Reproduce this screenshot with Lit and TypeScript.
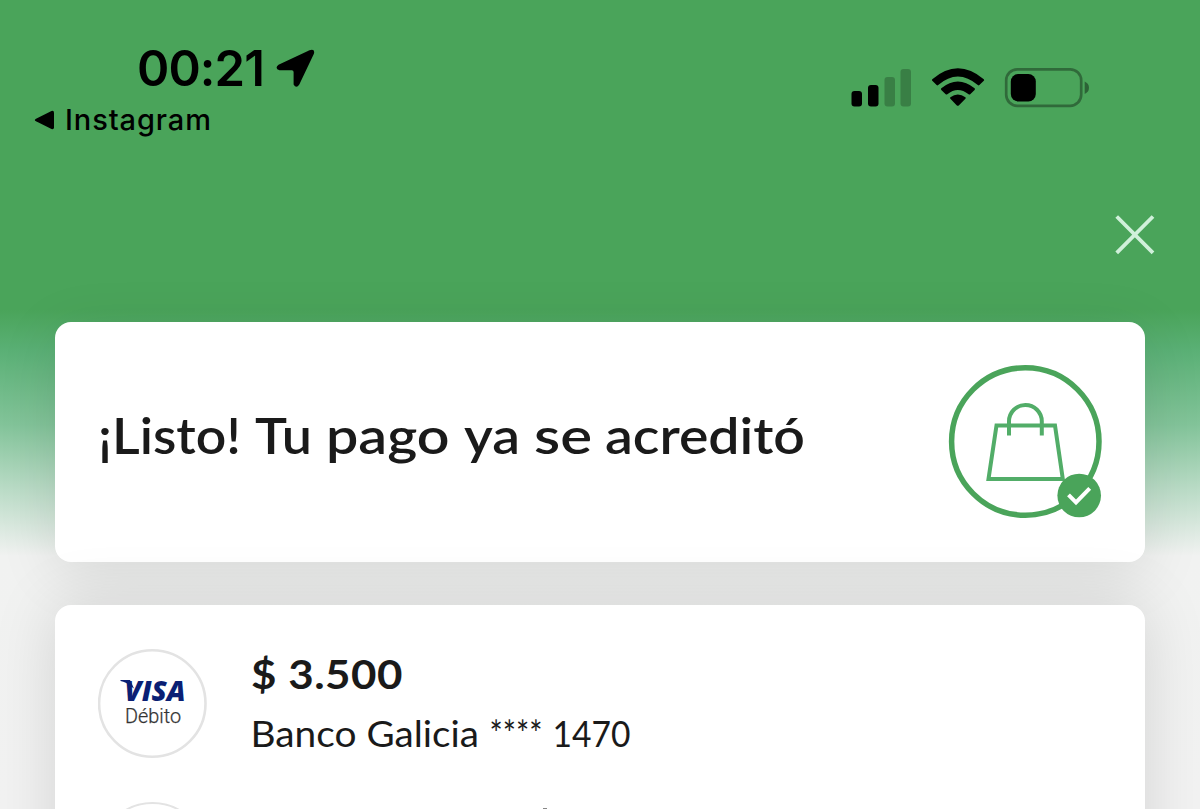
import { LitElement, html, svg, css } from "lit";
import { customElement } from "lit/decorators.js";

@customElement("status-bar")
class StatusBar extends LitElement {
  static styles = css`
    :host { display: flex; justify-content: space-between; height: 180px; box-sizing: border-box; padding: 39px 110px 0 34px; color: #000; font-family: Inter, sans-serif; }
    .left { display: flex; flex-direction: column; }
    .clock { display: flex; align-items: center; height: 60px; padding-left: 103px; }
    .time { font-size: 49px; font-weight: 600; line-height: 60px; letter-spacing: -0.9px; white-space: nowrap; }
    .arrow { margin-left: 12px; display: block; }
    .back { display: flex; align-items: center; height: 40px; margin-top: 1px; font-size: 29px; font-weight: 500; letter-spacing: 0.9px; line-height: 40px; }
    .back svg { margin-right: 10px; display: block; }
    .right { display: flex; padding-top: 27px; }
    .right svg { display: block; }
  `;
  render() {
    return html`
      <div class="left">
        <div class="clock">
          <span class="time">00:21</span>
          <svg class="arrow" width="40" height="40" viewBox="0 0 40 40"><path d="M2.500 15.800 33.500 1.300Q39.500 -.5 37.800 5L23.300 35.500Q20.300 40 17.600 35.500V23Q17.600 21.300 15.800 21.300H3.500Q-1.800 19.400 2.500 15.800Z"/></svg>
        </div>
        <div class="back">
          <svg width="21" height="20" viewBox="0 0 21 20"><path d="M2 8.700 17.500.9Q20 .2 20 2.700V17.300Q20 19.800 17.500 19.100L2 11.300Q-.4 10 2 8.700Z"/></svg>
          <span>Instagram</span>
        </div>
      </div>
      <div class="right">
        <svg width="240" height="44" viewBox="850 66 240 44">
          <rect x="851.500" y="91" width="10.500" height="15.500" rx="3"/>
          <rect x="868" y="85" width="10.500" height="21.500" rx="3"/>
          <g opacity=".22"><rect x="884.500" y="77" width="10.500" height="29.500" rx="3"/><rect x="900.500" y="69" width="10.500" height="37.500" rx="3"/></g>
          <path d="M932.300 79.200Q957.800 57.300 983.800 79.200Q984.500 80 983.800 80.800L979.400 85.100Q978.600 85.800 977.800 85.100Q957.800 68.100 938.200 85.100Q937.400 85.800 936.600 85.100L932.300 80.800Q931.500 80 932.300 79.200Z"/>
          <path d="M941.300 88.300Q957.800 74.800 974.600 88.300Q975.400 89.100 974.600 89.900L970.200 94.200Q969.400 94.800 968.600 94.200Q957.800 85.600 947.300 94.200Q946.500 94.800 945.700 94.200L941.300 89.900Q940.500 89.100 941.300 88.300Z"/>
          <path d="M950.400 97.200Q957.800 91.600 965.400 97.200Q966.200 98 965.400 98.800L959 105.200Q957.800 106.300 956.600 105.200L950.400 98.800Q949.600 98 950.400 97.200Z"/>
          <rect x="1006.200" y="69.300" width="75" height="36.500" rx="11" fill="none" stroke="#000" stroke-opacity=".35" stroke-width="2.700"/>
          <rect x="1010.800" y="74" width="25" height="27.500" rx="7.500"/>
          <path d="M1084.700 81.500Q1089 83.500 1089 87.800T1084.700 94Z" opacity=".4"/>
        </svg>
      </div>`;
  }
}

@customElement("card-badge")
class CardBadge extends LitElement {
  static styles = css`
    :host { display: block; flex: none; width: 109px; height: 109px; }
    svg { display: block; }
    .visa { font: italic 800 29px "Open Sans", sans-serif; fill: #0a1f74; }
    .kind { font: 300 19.500px Roboto, sans-serif; fill: #333; stroke: #333; stroke-width: .25px; }
  `;
  render() {
    return html`<svg width="109" height="109" viewBox="0 0 109 109">
      <circle cx="54.300" cy="54.500" r="53.200" fill="#fff" stroke="#e3e3e3" stroke-width="2.600"/>
      <path d="M22.500 31H32L36 39.500 31.500 36.500Q28.500 33 22.500 32Z" fill="#0a1f74"/>
      <text class="visa" x="26.500" y="51.500" textLength="61" lengthAdjust="spacingAndGlyphs">VISA</text>
      <text class="kind" x="27" y="74.300" textLength="56" lengthAdjust="spacingAndGlyphs">Débito</text>
    </svg>`;
  }
}

type Word = [text: string, x: number, width: number];

const TITLE: Word[] = [["¡Listo!", 0, 143], ["Tu", 157, 57], ["pago", 228, 123.5], ["ya", 366, 56], ["se", 436, 58], ["acreditó", 507, 200]];
const BANK: Word[] = [["Banco", -1.500, 106], ["Galicia", 114.500, 112.500], ["****", 237.500, 53], ["1470", 300.500, 78]];

const words = (list: Word[], baseline: number) =>
  list.map(([text, x, width]) => svg`<text x=${x} y=${baseline} textLength=${width} lengthAdjust="spacingAndGlyphs">${text}</text>`);

@customElement("app-root")
class AppRoot extends LitElement {
  static styles = css`
    :host { display: block; width: 1200px; height: 809px; overflow: hidden; color: #1a1a1a; font-family: Lato, sans-serif;
      background: linear-gradient(#4aa45a 0, #4aa45a 310px, #5ab075 350px, #83c49a 425px, #bbdcc7 490px, #f1f2f1 556px, #f2f2f2 100%); }
    svg { display: block; overflow: visible; }
    .close { display: flex; justify-content: flex-end; height: 142px; padding: 35px 45px 0 0; box-sizing: border-box; }
    .cards { display: flex; flex-direction: column; gap: 43px; padding: 0 55px; }
    .card { background: #fff; border-radius: 16px; box-sizing: border-box; box-shadow: 0 12px 60px rgba(0, 0, 0, .1); }
    .done { height: 240px; display: flex; align-items: center; justify-content: space-between; padding: 0 43.500px 0 43px; }
    .title { margin: 0 0 12px; font-size: 50.500px; font-weight: 600; }
    .title text { fill: #1a1a1a; }
    .detail { height: 420px; padding: 44px 43px; box-shadow: 0 0 64px rgba(0, 0, 0, .13); }
    .row { display: flex; height: 152px; }
    .text { display: flex; flex-direction: column; padding-left: 45px; }
    .amount { font-size: 41px; line-height: 50px; font-weight: 700; letter-spacing: .5px; transform: scaleX(1.07); transform-origin: 0 50%; margin-left: -1px; }
    .bank { font-size: 36px; margin-top: 11px; fill: #1a1a1a; }
    .next { height: 109px; width: 109px; flex: none; box-sizing: border-box; border: 2.500px solid #e3e3e3; border-radius: 50%; margin-top: 1px; }
    .tip { margin: 7px 0 0 336px; width: 4px; height: 1px; flex: none; background: #888; }
  `;
  render() {
    return html`
      <status-bar></status-bar>
      <div class="close">
        <svg width="40" height="40" viewBox="0 0 40 40" fill="none" stroke="#d0f0da" stroke-width="3.800"><path d="M1.700 1.500 38 37.800M38 1.500 1.700 37.800"/></svg>
      </div>
      <main class="cards">
        <section class="card done">
          <h1 class="title"><svg width="710" height="60">${words(TITLE, 47.500)}</svg></h1>
          <svg width="154" height="154" viewBox="948 365 154 154" fill="none" stroke="#4aa45a">
            <circle cx="1025.300" cy="441.500" r="73.700" stroke-width="5.500"/>
            <path d="M996.500 425.500H1055L1062.800 479H988.500Z" stroke="#52ad68" stroke-width="4"/>
            <path d="M1009 435.500V421.300A16.400 16.400 0 0 1 1041.800 421.300V435.500" stroke="#52ad68" stroke-width="4"/>
            <circle cx="1079.200" cy="495.500" r="21.800" fill="#4aa45a" stroke="none"/>
            <path d="M1068.500 494.800 1076 502.300 1089.700 488.300" stroke="#fff" stroke-width="4"/>
          </svg>
        </section>
        <section class="card detail">
          <div class="row">
            <card-badge></card-badge>
            <div class="text">
              <span class="amount">$ 3.500</span>
              <svg class="bank" width="380" height="46">${words(BANK, 36.500)}</svg>
            </div>
          </div>
          <div class="row"><div class="next"></div><div class="tip"></div></div>
        </section>
      </main>`;
  }
}
